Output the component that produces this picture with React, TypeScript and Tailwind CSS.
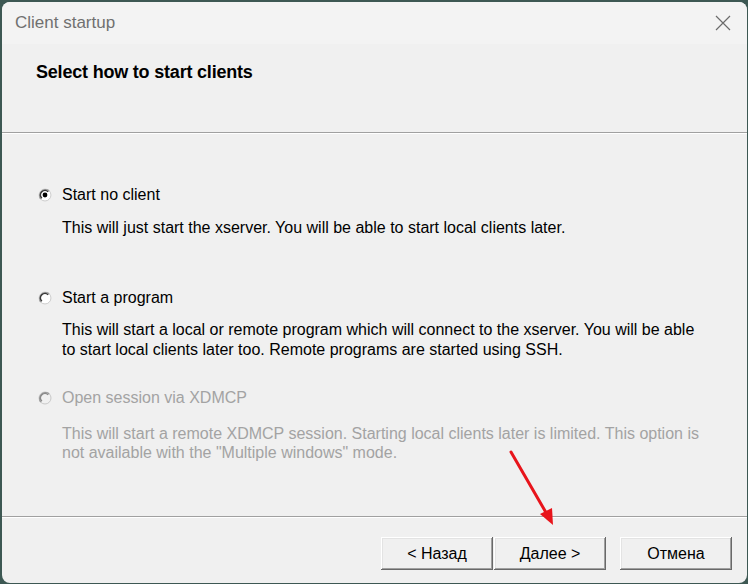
import React from "react";

function Radio({ checked = false, disabled = false }: { checked?: boolean; disabled?: boolean }) {
	return (
		<svg width="14" height="14" viewBox="0 0 14 14" className="shrink-0">
			<circle cx="7" cy="7" r="6.5" fill={disabled ? "#f0f0f0" : "#ffffff"} />
			<circle cx="7" cy="7" r="6" fill="none" stroke="#c8c8c8" strokeWidth="1" />
			<path d="M11.2 2.8 A6 6 0 0 0 2.8 11.2" fill="none" stroke="#9a9a9a" strokeWidth="1.2" />
			<path d="M10.2 3.8 A4.5 4.5 0 0 0 3.8 10.2" fill="none" stroke={disabled ? "#8a8a8a" : "#3a3a3a"} strokeWidth="1.6" />
			{checked && <circle cx="7" cy="7" r="2.4" fill="#000" />}
		</svg>
	);
}

function Btn({ children }: { children: React.ReactNode }) {
	return (
		<button className="w-[112px] h-[33px] bg-[#f0f0f0] text-[16px] text-black shadow-[inset_-1px_-1px_#696969,inset_1px_1px_#ffffff,inset_-2px_-2px_#a0a0a0,inset_2px_2px_#e3e3e3]">
			{children}
		</button>
	);
}

export default function App() {
	return (
		<div
			className="w-[748px] h-[584px] bg-[#3d5853] pl-[2px] pt-[2px] pr-[1px] pb-[1px]"
			style={{ fontFamily: '"Liberation Sans", Arial, sans-serif' }}
		>
			<div className="relative h-full rounded-lg bg-[#f0f0f0] flex flex-col overflow-hidden">
				{/* title bar */}
				<div className="h-[42px] bg-[#f3f3f3] flex items-center justify-between pl-[13px] pr-[16px]">
					<span className="text-[17px] text-[#707070]">Client startup</span>
					<svg width="16" height="16" viewBox="0 0 16 16">
						<path d="M1 1 L15 15 M15 1 L1 15" stroke="#6b6b6b" strokeWidth="1.2" />
					</svg>
				</div>
				{/* header */}
				<div className="h-[88px] pl-[34px] pt-[15px]">
					<span className="text-[18px] font-bold text-black tracking-[-0.2px]">Select how to start clients</span>
				</div>
				<div className="h-px bg-[#a0a0a0]" />
				<div className="h-px bg-white" />
				{/* body */}
				<div className="flex-1 pl-[36px] pt-[51px] text-[16px] leading-[20px]">
					<div className="flex items-center gap-[10px]">
						<Radio checked />
						<span className="text-black">Start no client</span>
					</div>
					<p className="mt-[13px] pl-[24px] text-black whitespace-nowrap">
						This will just start the xserver. You will be able to start local clients later.
					</p>
					<div className="mt-[50px] flex items-center gap-[10px]">
						<Radio />
						<span className="text-black">Start a program</span>
					</div>
					<p className="mt-[12px] pl-[24px] text-black whitespace-nowrap">
						This will start a local or remote program which will connect to the xserver. You will be able
						<br />
						to start local clients later too. Remote programs are started using SSH.
					</p>
					<div className="mt-[28px] flex items-center gap-[10px]">
						<Radio disabled />
						<span className="text-[#a3a3a3]">Open session via XDMCP</span>
					</div>
					<p className="mt-[16px] pl-[24px] text-[#a3a3a3] leading-[19px] whitespace-nowrap">
						This will start a remote XDMCP session. Starting local clients later is limited. This option is
						<br />
						not available with the "Multiple windows" mode.
					</p>
				</div>
				<div className="h-px bg-[#a0a0a0]" />
				<div className="h-px bg-white" />
				{/* buttons */}
				<div className="h-[65px] flex items-start pt-[19px] pl-[379px]">
					<Btn>&lt; Назад</Btn>
					<div className="ml-px">
						<Btn>Далее &gt;</Btn>
					</div>
					<div className="ml-[14px]">
						<Btn>Отмена</Btn>
					</div>
				</div>
				{/* annotation arrow */}
				<svg className="absolute left-0 top-0 pointer-events-none" width="748" height="584">
					<line x1="509" y1="450" x2="546" y2="514" stroke="#e8141b" strokeWidth="3" strokeLinecap="round" />
					<polygon points="551,523 538,512 550,506" fill="#e8141b" />
				</svg>
			</div>
		</div>
	);
}
